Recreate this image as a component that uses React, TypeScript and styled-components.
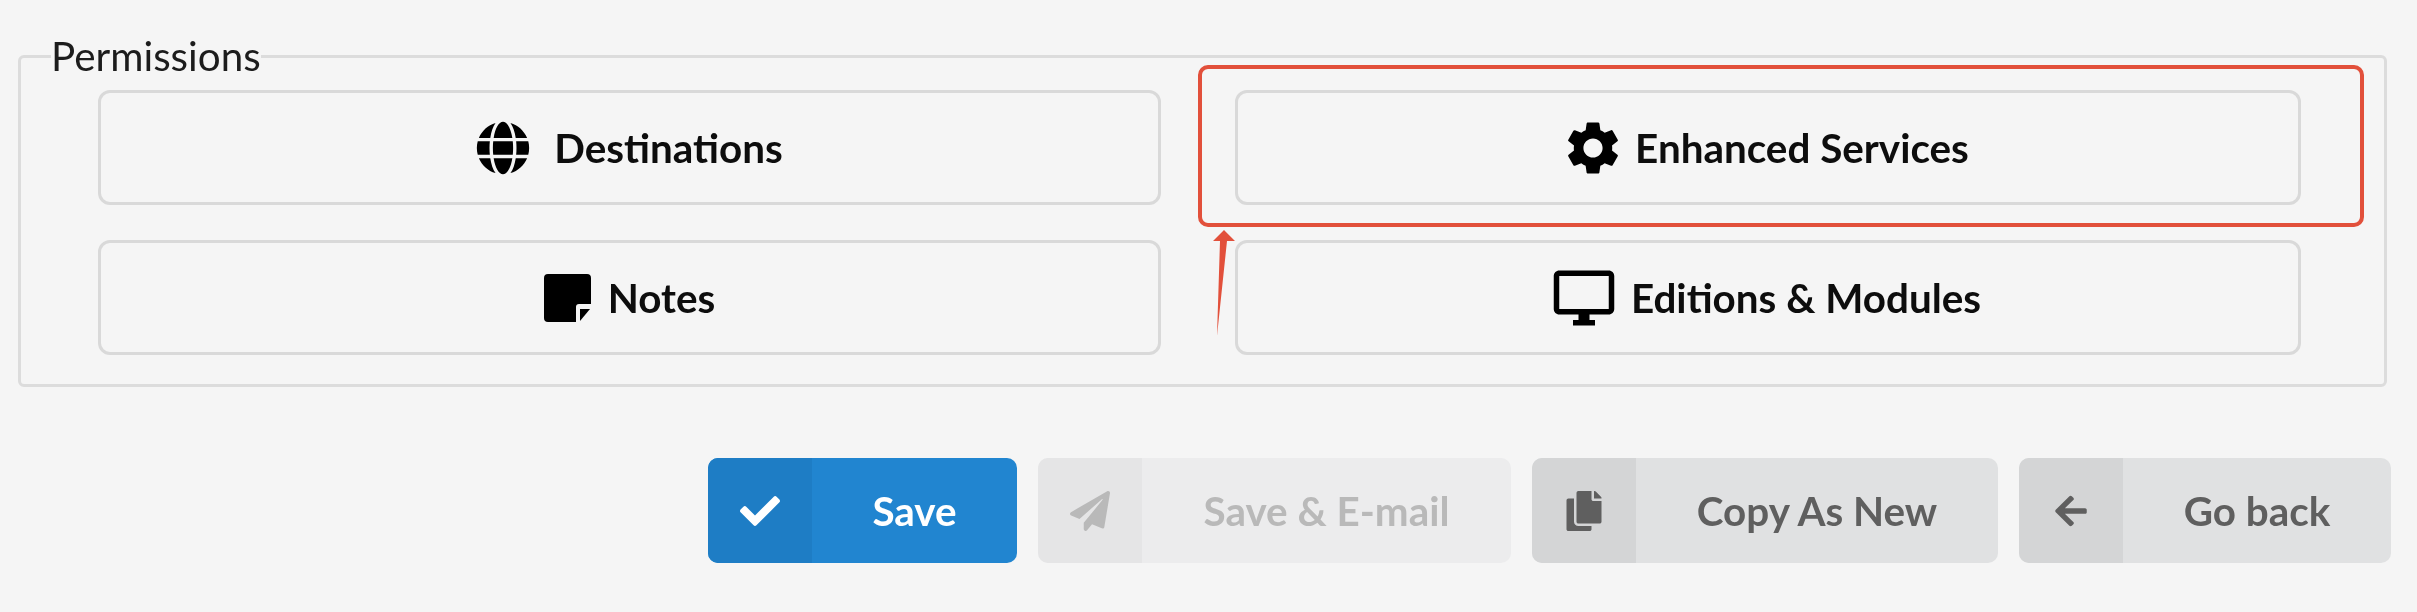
import React from 'react';
import styled, { createGlobalStyle } from 'styled-components';
import {
  FaArrowLeft,
  FaCheck,
  FaCopy,
  FaGlobe,
  FaPaperPlane,
} from 'react-icons/fa';
import { MdOutlineDesktopWindows, MdSettings } from 'react-icons/md';

const GlobalStyle = createGlobalStyle`
  html, body {
    margin: 0;
    padding: 0;
    background: #f5f5f5;
    font-family: Lato, "Open Sans", sans-serif;
  }
`;

const Page = styled.div`
  position: relative;
  box-sizing: border-box;
  width: 2417px;
  height: 612px;
  padding: 33px 30px 0 18px;
  overflow: hidden;
`;

const Content = styled.div`
  filter: blur(0.6px);
`;

const PermissionBox = styled.fieldset`
  margin: 0;
  padding: 11px 83px 29px 77px;
  border: 3px solid #dcdcdc;
  border-radius: 6px;
`;

const Legend = styled.legend`
  margin-left: -47px;
  padding: 0;
  font-size: 40.4px;
  line-height: 46px;
  color: #1c1c1c;
`;

const PermissionGrid = styled.div`
  display: grid;
  grid-template-columns: 1063px 1066px;
  column-gap: 74px;
  row-gap: 35px;
`;

const PermissionButton = styled.button<{ $gap: number; $inset: number }>`
  display: flex;
  align-items: center;
  justify-content: center;
  gap: ${(p) => p.$gap}px;
  box-sizing: border-box;
  height: 115px;
  padding: 0 ${(p) => p.$inset}px 0 0;
  background: transparent;
  border: 3px solid #d9d9d9;
  border-radius: 12px;
  font-family: inherit;
  font-size: 40.4px;
  font-weight: 700;
  color: #0d0d0d;

  svg {
    flex: none;
    color: #000;
  }
`;

const ActionBar = styled.div`
  display: flex;
  justify-content: flex-end;
  gap: 21px;
  margin-top: 71px;
  margin-right: -4px;
`;

type Tone = 'primary' | 'disabled' | 'plain';

const toneBody: Record<Tone, string> = {
  primary: '#2185d0',
  disabled: '#ececed',
  plain: '#e0e1e2',
};

const toneIcon: Record<Tone, string> = {
  primary: '#1e7dc5',
  disabled: '#e5e5e6',
  plain: '#d4d5d6',
};

const toneText: Record<Tone, string> = {
  primary: '#ffffff',
  disabled: '#b9b9b9',
  plain: '#5f5f5f',
};

const ActionButton = styled.button<{ $tone: Tone; $width: number }>`
  display: flex;
  align-items: stretch;
  box-sizing: border-box;
  width: ${(p) => p.$width}px;
  height: 105px;
  padding: 0;
  overflow: hidden;
  border: 0;
  border-radius: 10px;
  background: ${(p) => toneBody[p.$tone]};
  color: ${(p) => toneText[p.$tone]};
  font-family: inherit;
  font-size: 40.4px;
  font-weight: 700;
`;

const ActionIcon = styled.span<{ $tone: Tone }>`
  display: flex;
  align-items: center;
  justify-content: center;
  flex: 0 0 104px;
  background: ${(p) => toneIcon[p.$tone]};
`;

const ActionLabel = styled.span`
  display: flex;
  flex: 1;
  align-items: center;
  justify-content: center;
`;

const Highlight = styled.div`
  position: absolute;
  left: 1198px;
  top: 65px;
  width: 1166px;
  height: 162px;
  box-sizing: border-box;
  border: 4px solid #e2503b;
  border-radius: 10px;
`;

const ArrowMark = styled.svg`
  position: absolute;
  left: 1210px;
  top: 228px;
`;

const NoteIcon: React.FC = () => (
  <svg width="47" height="48" viewBox="0 0 47 48">
    <path
      fill="currentColor"
      d="M4 0H43a4 4 0 0 1 4 4V30H35a3 3 0 0 0-3 3V48H4a4 4 0 0 1-4-4V4a4 4 0 0 1 4-4z"
    />
    <path fill="currentColor" d="M36 35H46L36 47z" />
  </svg>
);

const permissions = [
  { label: 'Destinations', icon: <FaGlobe size={54} />, gap: 24, inset: 0 },
  { label: 'Enhanced Services', icon: <MdSettings size={64} />, gap: 10, inset: 6 },
  { label: 'Notes', icon: <NoteIcon />, gap: 17, inset: 0 },
  { label: 'Editions & Modules', icon: <MdOutlineDesktopWindows size={66} />, gap: 14, inset: 4 },
];

const actions: { label: string; tone: Tone; width: number; icon: React.ReactNode }[] = [
  { label: 'Save', tone: 'primary', width: 309, icon: <FaCheck size={40} /> },
  { label: 'Save & E-mail', tone: 'disabled', width: 473, icon: <FaPaperPlane size={40} /> },
  { label: 'Copy As New', tone: 'plain', width: 466, icon: <FaCopy size={40} /> },
  { label: 'Go back', tone: 'plain', width: 372, icon: <FaArrowLeft size={36} /> },
];

const App: React.FC = () => (
  <Page>
    <GlobalStyle />
    <Content>
      <PermissionBox>
        <Legend>Permissions</Legend>
        <PermissionGrid>
          {permissions.map((item) => (
            <PermissionButton key={item.label} $gap={item.gap} $inset={item.inset}>
              {item.icon}
              {item.label}
            </PermissionButton>
          ))}
        </PermissionGrid>
      </PermissionBox>
      <ActionBar>
        {actions.map((action) => (
          <ActionButton key={action.label} $tone={action.tone} $width={action.width}>
            <ActionIcon $tone={action.tone}>{action.icon}</ActionIcon>
            <ActionLabel>{action.label}</ActionLabel>
          </ActionButton>
        ))}
      </ActionBar>
    </Content>
    <Highlight />
    <ArrowMark width="30" height="112" viewBox="0 0 30 112">
      <path d="M14 2 L25 13 L17 13 L7 108 L10 13 L3 13 Z" fill="#e2503b" />
    </ArrowMark>
  </Page>
);

export default App;
